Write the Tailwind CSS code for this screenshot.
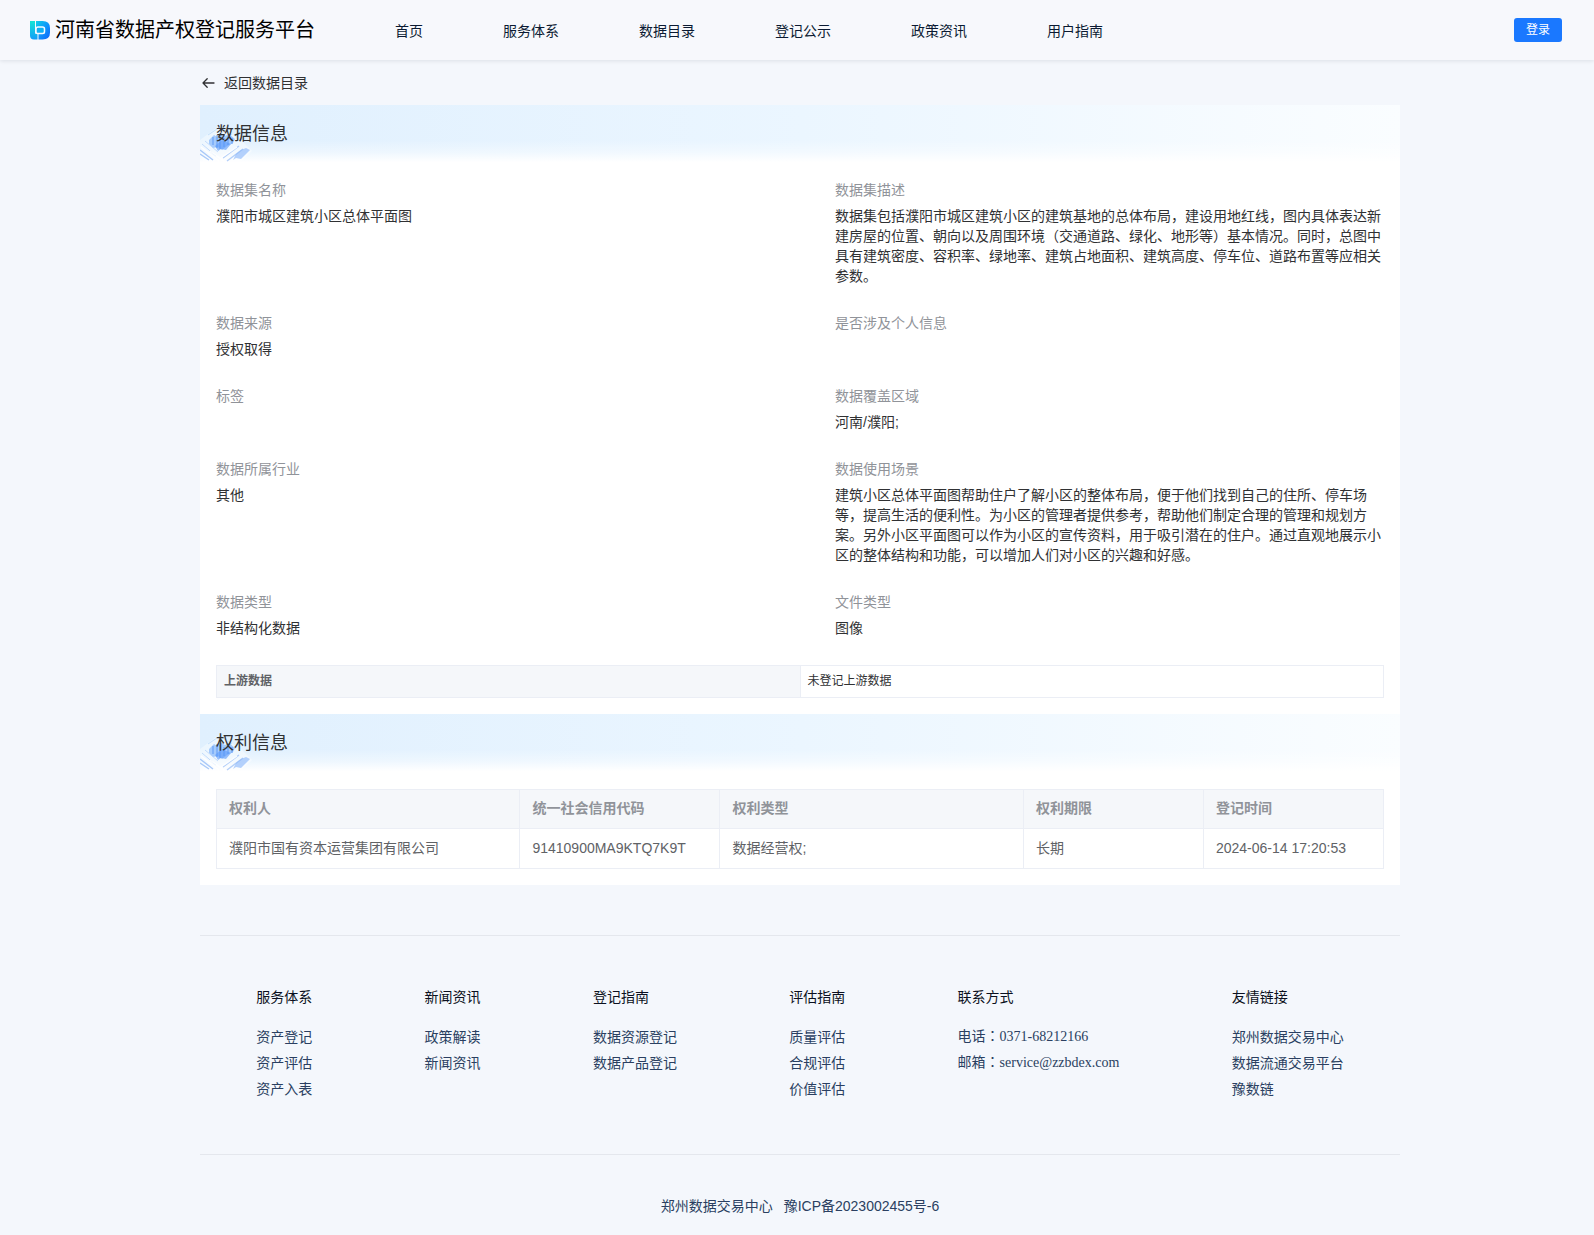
<!DOCTYPE html>
<html lang="zh-CN">
<head>
    <meta charset="UTF-8">
    <meta name="viewport" content="width=device-width, initial-scale=1.0">
    <title>河南省数据产权登记服务平台</title>
    <script src="https://cdn.jsdelivr.net/npm/@tailwindcss/browser@4"></script>
</head>
<body class="min-h-screen bg-[#f4f7fc] font-['Liberation_Sans','Noto_Sans_CJK_SC',sans-serif] text-sm leading-5 text-[#303133]">
    <!-- Top bar -->
    <header class="relative flex h-15 items-center bg-[#f7f8fc] px-[30px] shadow-[0_1px_4px_rgba(0,21,41,0.1)]">
        <a href="#" class="flex items-center gap-[5px] text-xl text-black">
            <svg class="size-5" viewBox="0 0 20 20" aria-hidden="true">
                <defs>
                    <linearGradient id="logoBar" x1="0" y1="0" x2="0" y2="1">
                        <stop offset="0" stop-color="#14e4d4"/>
                        <stop offset="1" stop-color="#129df8"/>
                    </linearGradient>
                    <linearGradient id="logoBowl" x1="0" y1="0" x2="1" y2="1">
                        <stop offset="0" stop-color="#0fd0e8"/>
                        <stop offset=".5" stop-color="#0e96fa"/>
                        <stop offset="1" stop-color="#0c62fb"/>
                    </linearGradient>
                </defs>
                <path d="M0 1h5v11.5q0 1.500 1.500 1.500H7.500v5.500H4Q0 19.500 0 15.500z" fill="url(#logoBar)"/>
                <path d="M6 1h6.500Q20 1 20 8v4.500Q20 19.500 12.500 19.500H8.500V14h4.500q2 0 2-2V9q0-2-2-2H8q-2 0-2 2z" fill="url(#logoBowl)"/>
                <path d="M6 9q0-2 2-2h4.500q2 0 2 2v2.500q0 2-2 2H7.500Q6 13.500 6 12z" fill="#0fb0f2" stroke="#f4f9ff" stroke-width="1.500"/>
            </svg>
            <span>河南省数据产权登记服务平台</span>
        </a>
        <nav class="ml-20 flex gap-20 pt-px text-[#0b1a32]">
            <a href="#">首页</a>
            <a href="#">服务体系</a>
            <a href="#">数据目录</a>
            <a href="#">登记公示</a>
            <a href="#">政策资讯</a>
            <a href="#">用户指南</a>
        </nav>
        <button type="button" class="mr-0.5 ml-auto h-6 rounded-[3px] bg-[#1a78ff] px-3 text-xs text-white">登录</button>
    </header>

    <div class="pl-1.5">
        <main class="mx-auto max-w-[1200px]">
            <a href="#" class="flex h-[45px] w-fit items-center gap-2 pl-0.5">
                <svg class="size-[14px]" viewBox="0 0 14 14" fill="none" stroke="currentColor" stroke-width="1.300" stroke-linecap="round" stroke-linejoin="round" aria-hidden="true">
                    <path d="M12 7H1M5.200 2.700L1 7L5.200 11.300"/>
                </svg>
                返回数据目录
            </a>

            <div class="bg-white">
                <!-- Data info -->
                <section>
                    <div class="relative bg-linear-to-r from-[#e0f0fe] via-[#ebf6ff] to-[#fafdff] p-4">
                        <div class="absolute inset-0 bg-linear-to-t from-white from-3% via-white/40 via-20% to-white/0 to-40%"></div>
                        <svg class="absolute bottom-0 left-0 h-10 w-[54px]" viewBox="0 0 54 40" aria-hidden="true">
                            <defs>
                                <filter id="soft" x="-10%" y="-10%" width="120%" height="120%"><feGaussianBlur stdDeviation=".45"/></filter>
                                <g id="tiles" filter="url(#soft)">
                                    <path d="M0 16L19 2L42 17L52 27L40 38H4L0 32z" fill="#fff" fill-opacity=".4"/>
                                    <path d="M8 11l12-8 12 8" fill="none" stroke="#c4e0fb" stroke-width="1"/>
                                    <path d="M9 16l5-5 3 2 3-4 5 3 4-2 6 5-2 4-6 3-5 4-4-3-5 1-4-4z" fill="#8dbcfb" opacity=".75"/>
                                    <path d="M13 13v8M17 11v13M20 12v13M24 14v9M28 12v9M32 14v6" stroke="#5594f6" stroke-width="1.500" opacity=".6"/>
                                    <path d="M15 22l7-6 9 4-5 6-5-1-3 2z" fill="#5a99fa" opacity=".6"/>
                                    <path d="M36 30l5-4 5-2 4 2-5 5-4 4-5-1-3 2z" fill="#8fbafb" opacity=".65"/>
                                    <path d="M0 26l13 10M0 30l9 6" stroke="#8fb8f6" stroke-width="1.500" opacity=".75"/>
                                    <path d="M2 20l14 12M5 17l13 11" stroke="#b5d3fb" stroke-width="1" opacity=".8"/>
                                    <path d="M27 37l16-12M23 34l16-12" stroke="#8fb8f6" stroke-width="1.500" opacity=".65"/>
                                    <path d="M1 23L19 37M10 27L25 38M21 34L37 23" stroke="#fff" stroke-width="1.500" opacity=".9"/>
                                </g>
                            </defs>
                            <use href="#tiles"/>
                        </svg>
                        <h2 class="relative text-lg leading-[27px]">数据信息</h2>
                    </div>
                    <div class="p-4">
                        <dl class="grid grid-cols-2 gap-x-[70px]">
                            <div class="pb-[27px]">
                                <dt class="mb-1.5 text-[#909399]">数据集名称</dt>
                                <dd class="min-h-5">濮阳市城区建筑小区总体平面图</dd>
                            </div>
                            <div class="pb-[27px]">
                                <dt class="mb-1.5 text-[#909399]">数据集描述</dt>
                                <dd class="min-h-5">数据集包括濮阳市城区建筑小区的建筑基地的总体布局，建设用地红线，图内具体表达新建房屋的位置、朝向以及周围环境（交通道路、绿化、地形等）基本情况。同时，总图中具有建筑密度、容积率、绿地率、建筑占地面积、建筑高度、停车位、道路布置等应相关参数。</dd>
                            </div>
                            <div class="pb-[27px]">
                                <dt class="mb-1.5 text-[#909399]">数据来源</dt>
                                <dd class="min-h-5">授权取得</dd>
                            </div>
                            <div class="pb-[27px]">
                                <dt class="mb-1.5 text-[#909399]">是否涉及个人信息</dt>
                                <dd class="min-h-5"></dd>
                            </div>
                            <div class="pb-[27px]">
                                <dt class="mb-1.5 text-[#909399]">标签</dt>
                                <dd class="min-h-5"></dd>
                            </div>
                            <div class="pb-[27px]">
                                <dt class="mb-1.5 text-[#909399]">数据覆盖区域</dt>
                                <dd class="min-h-5">河南/濮阳;</dd>
                            </div>
                            <div class="pb-[27px]">
                                <dt class="mb-1.5 text-[#909399]">数据所属行业</dt>
                                <dd class="min-h-5">其他</dd>
                            </div>
                            <div class="pb-[27px]">
                                <dt class="mb-1.5 text-[#909399]">数据使用场景</dt>
                                <dd class="min-h-5">建筑小区总体平面图帮助住户了解小区的整体布局，便于他们找到自己的住所、停车场等，提高生活的便利性。为小区的管理者提供参考，帮助他们制定合理的管理和规划方案。另外小区平面图可以作为小区的宣传资料，用于吸引潜在的住户。通过直观地展示小区的整体结构和功能，可以增加人们对小区的兴趣和好感。</dd>
                            </div>
                            <div class="pb-[27px]">
                                <dt class="mb-1.5 text-[#909399]">数据类型</dt>
                                <dd class="min-h-5">非结构化数据</dd>
                            </div>
                            <div class="pb-[27px]">
                                <dt class="mb-1.5 text-[#909399]">文件类型</dt>
                                <dd class="min-h-5">图像</dd>
                            </div>
                        </dl>
                        <table class="w-full table-fixed border-collapse text-left text-xs leading-5">
                            <tbody>
                                <tr>
                                    <th scope="row" class="border border-[#ebeef5] bg-[#f5f7fa] px-[7px] pt-[5px] pb-1.5 font-bold text-[#606266]">上游数据</th>
                                    <td class="border border-[#ebeef5] px-[7px] pt-[5px] pb-1.5">未登记上游数据</td>
                                </tr>
                            </tbody>
                        </table>
                    </div>
                </section>

                <!-- Rights info -->
                <section>
                    <div class="relative bg-linear-to-r from-[#e0f0fe] via-[#ebf6ff] to-[#fafdff] p-4">
                        <div class="absolute inset-0 bg-linear-to-t from-white from-3% via-white/40 via-20% to-white/0 to-40%"></div>
                        <svg class="absolute bottom-0 left-0 h-10 w-[54px]" viewBox="0 0 54 40" aria-hidden="true">
                            <use href="#tiles"/>
                        </svg>
                        <h2 class="relative text-lg leading-[27px]">权利信息</h2>
                    </div>
                    <div class="p-4">
                        <table class="w-full table-fixed border-collapse text-left text-[#606266]">
                            <colgroup>
                                <col class="w-[26%]">
                                <col class="w-[200px]">
                                <col class="w-[26%]">
                                <col class="w-[180px]">
                                <col class="w-[180px]">
                            </colgroup>
                            <thead class="bg-[#f5f7fa] text-[#909399]">
                                <tr>
                                    <th scope="col" class="border border-[#ebeef5] px-3 pt-2 pb-2.5">权利人</th>
                                    <th scope="col" class="border border-[#ebeef5] px-3 pt-2 pb-2.5">统一社会信用代码</th>
                                    <th scope="col" class="border border-[#ebeef5] px-3 pt-2 pb-2.5">权利类型</th>
                                    <th scope="col" class="border border-[#ebeef5] px-3 pt-2 pb-2.5">权利期限</th>
                                    <th scope="col" class="border border-[#ebeef5] px-3 pt-2 pb-2.5">登记时间</th>
                                </tr>
                            </thead>
                            <tbody>
                                <tr>
                                    <td class="border border-[#ebeef5] px-3 pt-[9px] pb-2.5">濮阳市国有资本运营集团有限公司</td>
                                    <td class="border border-[#ebeef5] px-3 pt-[9px] pb-2.5">91410900MA9KTQ7K9T</td>
                                    <td class="border border-[#ebeef5] px-3 pt-[9px] pb-2.5">数据经营权;</td>
                                    <td class="border border-[#ebeef5] px-3 pt-[9px] pb-2.5">长期</td>
                                    <td class="border border-[#ebeef5] px-3 pt-[9px] pb-2.5">2024-06-14 17:20:53</td>
                                </tr>
                            </tbody>
                        </table>
                    </div>
                </section>
            </div>
        </main>

        <footer class="mx-auto mt-[50px] max-w-[1200px] text-[#2a3f61]">
            <div class="flex justify-around border-y border-[#e4e7ed] pt-[51px] pb-[52px]">
                <div>
                    <h3 class="mb-[17px] text-[#0b1020]">服务体系</h3>
                    <ul class="leading-[26px]">
                        <li><a href="#">资产登记</a></li>
                        <li><a href="#">资产评估</a></li>
                        <li><a href="#">资产入表</a></li>
                    </ul>
                </div>
                <div>
                    <h3 class="mb-[17px] text-[#0b1020]">新闻资讯</h3>
                    <ul class="leading-[26px]">
                        <li><a href="#">政策解读</a></li>
                        <li><a href="#">新闻资讯</a></li>
                    </ul>
                </div>
                <div>
                    <h3 class="mb-[17px] text-[#0b1020]">登记指南</h3>
                    <ul class="leading-[26px]">
                        <li><a href="#">数据资源登记</a></li>
                        <li><a href="#">数据产品登记</a></li>
                    </ul>
                </div>
                <div>
                    <h3 class="mb-[17px] text-[#0b1020]">评估指南</h3>
                    <ul class="leading-[26px]">
                        <li><a href="#">质量评估</a></li>
                        <li><a href="#">合规评估</a></li>
                        <li><a href="#">价值评估</a></li>
                    </ul>
                </div>
                <div>
                    <h3 class="mb-[17px] text-[#0b1020]">联系方式</h3>
                    <ul lang="ja" class="font-['Liberation_Serif','Noto_Sans_CJK_JP',serif] leading-[26px]">
                        <li>电话：0371-68212166</li>
                        <li>邮箱：service@zzbdex.com</li>
                    </ul>
                </div>
                <div>
                    <h3 class="mb-[17px] text-[#0b1020]">友情链接</h3>
                    <ul class="leading-[26px]">
                        <li><a href="#">郑州数据交易中心</a></li>
                        <li><a href="#">数据流通交易平台</a></li>
                        <li><a href="#">豫数链</a></li>
                    </ul>
                </div>
            </div>
            <div class="flex justify-center gap-[11px] pt-[41px] pb-[18px]">
                <span>郑州数据交易中心</span>
                <a href="#">豫ICP备2023002455号-6</a>
            </div>
        </footer>
    </div>
</body>
</html>
